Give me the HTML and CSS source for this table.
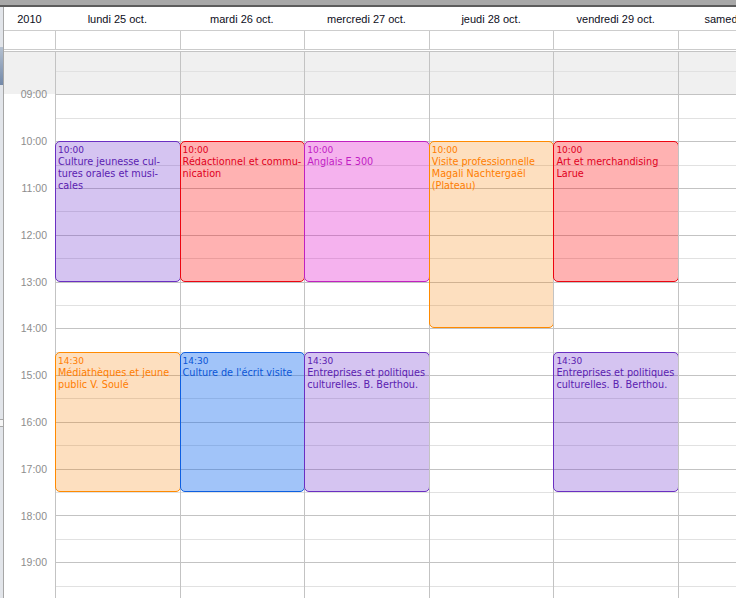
FILE: index.html
```html
<!DOCTYPE html>
<html lang="fr">
<head>
<meta charset="utf-8">
<title>Calendrier - semaine</title>
<link rel="stylesheet" href="styles.css">
</head>
<body>
<div class="topbar"></div>
<div class="main">
  <div class="strip">
    <div class="strip-sel"></div>
    <div class="strip-knob"></div>
  </div>
  <div class="cal">
    <div class="head cols">
      <div class="year">2010</div>
      <div class="dayname">lundi 25 oct.</div>
      <div class="dayname">mardi 26 oct.</div>
      <div class="dayname">mercredi 27 oct.</div>
      <div class="dayname">jeudi 28 oct.</div>
      <div class="dayname">vendredi 29 oct.</div>
      <div class="dayname">samedi 30 oct.</div>
    </div>
    <div class="allday cols">
      <div></div>
      <div class="ad"></div>
      <div class="ad"></div>
      <div class="ad"></div>
      <div class="ad"></div>
      <div class="ad"></div>
      <div class="ad"></div>
    </div>
    <div class="sep"></div>
    <div class="body cols">
      <div class="offhours"></div>
      <div class="lines">
        <div class="spacer"></div>
        <div></div><div></div><div></div><div></div><div></div><div></div>
        <div></div><div></div><div></div><div></div><div></div><div></div>
        <div></div><div></div><div></div><div></div><div></div><div></div>
        <div></div><div></div><div></div><div></div><div></div><div></div>
      </div>
      <div class="times">
        <div class="spacer"></div>
        <div class="hl">09:00</div>
        <div class="hl">10:00</div>
        <div class="hl">11:00</div>
        <div class="hl">12:00</div>
        <div class="hl">13:00</div>
        <div class="hl">14:00</div>
        <div class="hl">15:00</div>
        <div class="hl">16:00</div>
        <div class="hl">17:00</div>
        <div class="hl">18:00</div>
        <div class="hl">19:00</div>
      </div>

      <div class="daycol c1">
        <div class="ev purple" style="grid-row: 5 / 11">
          <div class="t">10:00</div>
          <div class="n">Culture jeunesse cul-<br>tures orales et musi-<br>cales</div>
        </div>
        <div class="ev orange" style="grid-row: 14 / 20">
          <div class="t">14:30</div>
          <div class="n">Médiathèques et jeune<br>public V. Soulé</div>
        </div>
      </div>

      <div class="daycol c2">
        <div class="ev red" style="grid-row: 5 / 11">
          <div class="t">10:00</div>
          <div class="n">Rédactionnel et commu-<br>nication</div>
        </div>
        <div class="ev blue" style="grid-row: 14 / 20">
          <div class="t">14:30</div>
          <div class="n">Culture de l'écrit visite</div>
        </div>
      </div>

      <div class="daycol c3">
        <div class="ev magenta" style="grid-row: 5 / 11">
          <div class="t">10:00</div>
          <div class="n">Anglais E 300</div>
        </div>
        <div class="ev purple" style="grid-row: 14 / 20">
          <div class="t">14:30</div>
          <div class="n">Entreprises et politiques<br>culturelles. B. Berthou.</div>
        </div>
      </div>

      <div class="daycol c4">
        <div class="ev orange" style="grid-row: 5 / 13">
          <div class="t">10:00</div>
          <div class="n">Visite professionnelle<br>Magali Nachtergaël<br>(Plateau)</div>
        </div>
      </div>

      <div class="daycol c5">
        <div class="ev red" style="grid-row: 5 / 11">
          <div class="t">10:00</div>
          <div class="n">Art et merchandising<br>Larue</div>
        </div>
        <div class="ev purple" style="grid-row: 14 / 20">
          <div class="t">14:30</div>
          <div class="n">Entreprises et politiques<br>culturelles. B. Berthou.</div>
        </div>
      </div>

      <div class="daycol c6"></div>
    </div>
  </div>
</div>
</body>
</html>
```

FILE: styles.css
```css
html, body {
  margin: 0;
  padding: 0;
  width: 736px;
  height: 598px;
  overflow: hidden;
  background: #ffffff;
  font-family: "Liberation Sans", Arial, sans-serif;
}

.topbar {
  height: 5px;
  background: #a8a8a8;
  border-bottom: 2px solid #5c5c5c;
}

.main {
  display: flex;
  height: 591px;
}

.strip {
  flex: none;
  width: 3px;
  background: #e2e5ea;
  border-right: 1px solid #a6a6a6;
  display: flex;
  flex-direction: column;
}

.strip-sel {
  margin-top: 40px;
  height: 38px;
  background: linear-gradient(#b4c0d0, #7389a9);
}

.strip-knob {
  margin-top: 334px;
  height: 6px;
  background: #f6f6f6;
  border-top: 1px solid #a8a8a8;
  border-bottom: 1px solid #a8a8a8;
}

.cal {
  flex: 1;
  min-width: 0;
  overflow: hidden;
}

.cols {
  display: grid;
  grid-template-columns: 51px repeat(6, 124.6px);
}

/* header with dates */
.head {
  height: 23px;
  border-bottom: 1px solid #cdcdcd;
  align-items: center;
  font-size: 11px;
  color: #0d0d1a;
  white-space: nowrap;
}

.year,
.dayname {
  text-align: center;
}

/* all day row */
.allday {
  height: 18px;
  border-bottom: 1px solid #cbcbcb;
}

.ad {
  border-left: 1px solid #c8c8c8;
}

.sep {
  height: 1px;
  border-bottom: 1px solid #c4c4c4;
}

/* hours grid */
.body {
  grid-template-rows: 19px repeat(24, 23.4px);
}

.offhours {
  grid-column: 1 / -1;
  grid-row: 1 / 3;
  background: #f0f0f0;
}

.lines {
  grid-column: 2 / -1;
  grid-row: 1 / -1;
  display: flex;
  flex-direction: column;
}

.lines > div {
  flex: none;
  box-sizing: border-box;
  height: 23.4px;
  border-top: 1px solid #c3c3c3;
}

.lines > div:nth-child(even) {
  border-top-color: #e1e1e1;
}

.lines > .spacer {
  height: 19px;
  border-top: none;
}

.times {
  grid-column: 1;
  grid-row: 1 / -1;
  display: flex;
  flex-direction: column;
}

.times .spacer {
  flex: none;
  height: 19px;
}

.hl {
  flex: none;
  height: 46.8px;
  display: flex;
  align-items: center;
  justify-content: flex-end;
  padding-right: 8px;
  font-size: 10.5px;
  color: #8d8d8d;
}

.daycol {
  grid-row: 1 / -1;
  border-left: 1px solid #c3c3c3;
  display: grid;
  grid-template-rows: 19px repeat(24, 23.4px);
  grid-template-columns: minmax(0, 1fr);
}

.c1 { grid-column: 2; }
.c2 { grid-column: 3; }
.c3 { grid-column: 4; }
.c4 { grid-column: 5; }
.c5 { grid-column: 6; }
.c6 { grid-column: 7; }

/* events */
.ev {
  grid-column: 1;
  margin: 0 -1px 0 -1px;
  box-sizing: border-box;
  border: 1px solid;
  border-radius: 5px;
  padding: 2px 2px 0 2px;
  overflow: hidden;
  font-family: "DejaVu Sans", "Liberation Sans", sans-serif;
  white-space: nowrap;
}

.ev .t {
  font-size: 9px;
  line-height: 12px;
}

.ev .n {
  font-size: 9.7px;
  line-height: 12px;
}

.purple {
  background: rgba(115, 58, 208, 0.3);
  border-color: #6a2fc2;
  color: #5a20b0;
}

.red {
  background: rgba(255, 0, 0, 0.3);
  border-color: #ec0510;
  color: #e0001c;
}

.magenta {
  background: rgba(222, 0, 200, 0.3);
  border-color: #c021bf;
  color: #c21dc4;
}

.orange {
  background: rgba(247, 127, 0, 0.25);
  border-color: #ff8a00;
  color: #ff7d00;
}

.blue {
  background: rgba(20, 107, 240, 0.4);
  border-color: #0d5fe2;
  color: #0a55d6;
}
```
